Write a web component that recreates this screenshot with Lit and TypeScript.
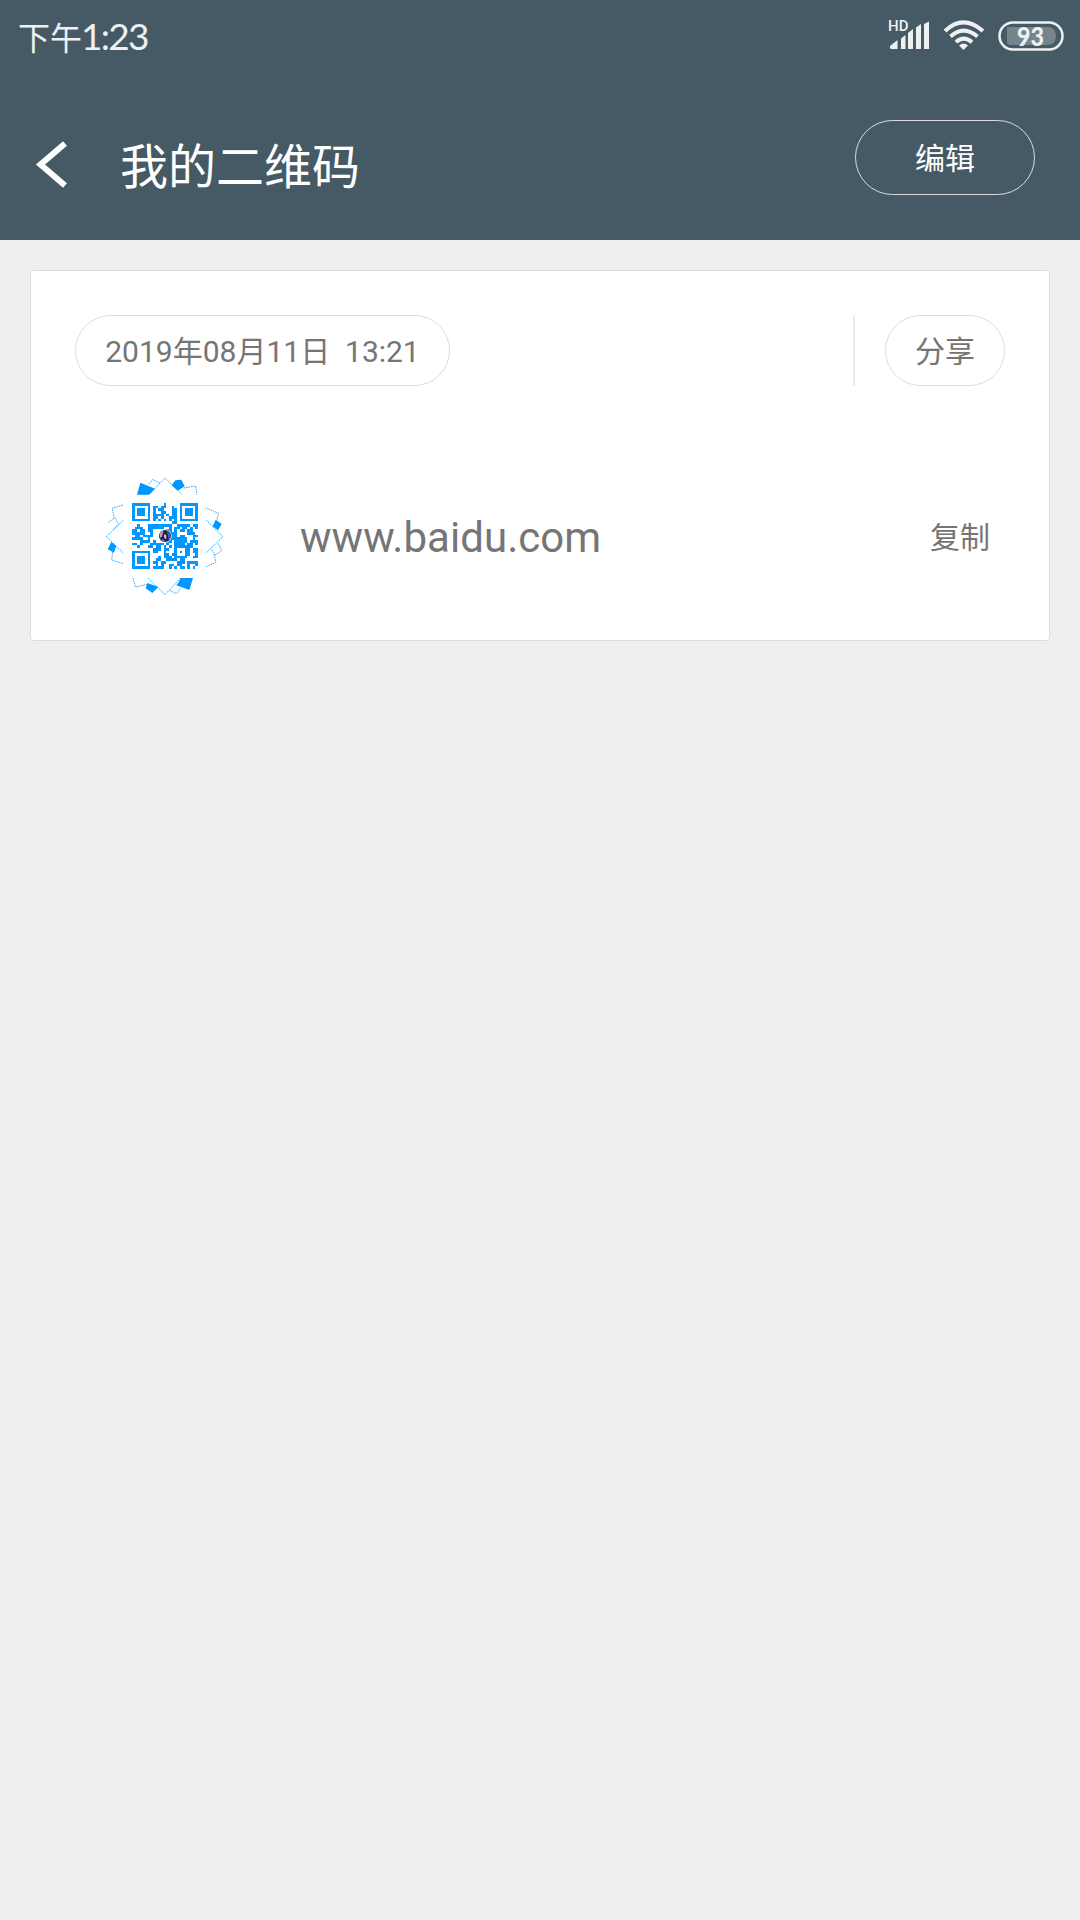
import { LitElement, html, css, svg } from "lit";
import { customElement } from "lit/decorators.js";

const MODULES = [
  "1111111.....1.....1111111",
  "1.....1.11.11..1..1.....1",
  "1.111.1.1.11...11.1.111.1",
  "1.111.1.1..11..11.1.111.1",
  "1.111.1.1111.1.11.1.111.1",
  "1.....1.11.1..111.1.....1",
  "1111111.1.1.1.1.1.1111111",
  "...............11........",
  "..1...111111111..11111.11",
  ".111..111111..1.11.11.1.1",
  "11.11.11.....11.1.11.11..",
  "11111..1......111....111.",
  ".11.1111......111.11...11",
  "1111..1.......1111111..1.",
  "...1111.1....11.11111.111",
  "11.1...11111.1..1111.11.1",
  "..1...11.11.1.1.1111111..",
  "........111.11..1...11.11",
  "1111111.11..1...1.1.11.11",
  "1.....1.....11.11...11..1",
  "1.111.1...1.111.11111..11",
  "1.111.1..11..1111.11.....",
  "1.111.1.11.11....111.1111",
  "1.....1..1.1..11.11..1..1",
  "1111111.1111..1.1.11.1.1.",
];

@customElement("qr-thumb")
class QrThumb extends LitElement {
  static styles = css`
    :host { display: block; width: 130px; height: 130px; }
    svg { display: block; }
    .fill { fill: #0098ff; }
    .line { fill: none; stroke: #0098ff; stroke-width: 2.8; stroke-dasharray: 5 2.5; opacity: .85; }
  `;
  render() {
    return html`<svg width="130" height="130" viewBox="0 0 390 390">
      <g class="fill">
        <path d="M121 38 165 56 147 74H111ZM226 31 244 29 254 49 233 62 215 46ZM347 149 365 162 354 181 338 169ZM34 216 49 228 42 248 23 238ZM142 339 175 351 157 369 137 355ZM242 324H279L268 360 229 346 236 337Z"/>
      </g>
      <g class="line">
        <path d="M147 74 195 24 245 73M147 43 158 28 180 39M251 54 287 48 291 74M318 114 356 130 350 151M318 150 369 200 318 249M355 220 365 242 346 255 333 236M342 253 348 277 318 291M69 105 36 115 44 147M70 151 19 200 70 249M25 157 45 143 56 163 39 179M38 247 35 270 70 281M99 324 106 351 142 343M144 324 195 374 242 324M210 362 230 371 241 355"/>
      </g>
      <g transform="translate(96 99) scale(7.92)" class="fill" shape-rendering="crispEdges">
        ${MODULES.map((row, y) => [...row].map((m, x) => m === "1"
          ? svg`<rect x=${x} y=${y} width="1" height="1"/>` : null))}
      </g>
      <circle cx="195" cy="198" r="20" fill="#fff"/>
      <circle cx="195" cy="198" r="18" fill="#29204b"/>
      <path d="M202 184Q211 190 212 203L205 211Q207 196 200 186Z" fill="#4464cf"/>
      <path d="M179 192Q186 181 190 184L186 199 180 204Z" fill="#bfa4c7"/>
      <path d="M194 192 199 197 198 208 194 205 192 197Z" fill="#ead2da"/>
      <path d="M188 207 195 213 190 215 183 210Z" fill="#8e6d96"/>
    </svg>`;
  }
}

@customElement("app-root")
class AppRoot extends LitElement {
  static styles = css`
    :host {
      display: flex; flex-direction: column; width: 1080px; height: 1920px;
      background: #eee; color: #757575; overflow: hidden;
      font-family: Roboto, "Noto Sans CJK SC", sans-serif;
    }
    * { box-sizing: border-box; }
    svg { display: block; flex: none; overflow: visible; }
    .top { height: 240px; background: #465a65; color: #fff; }
    .status {
      height: 72px; padding: 0 16px 0 18px; display: flex;
      align-items: center; justify-content: space-between; color: #eef0f1;
    }
    .time { display: flex; align-items: baseline; font-size: 32px; line-height: 40px; padding-top: 2px; }
    .clock { font-family: Lato, sans-serif; font-size: 37px; letter-spacing: -1.7px; margin-left: -1px; }
    .bar { height: 168px; display: flex; padding: 0 45px 0 36px; }
    .back { margin-top: 69px; }
    .title {
      margin: 62px 0 0 52px; font-size: 48px; line-height: 58px; font-weight: 400;
      font-family: "Noto Sans CJK SC", sans-serif; white-space: nowrap;
    }
    .pill {
      display: flex; align-items: center; justify-content: center;
      border: 1px solid #dcdcdc; border-radius: 36px; font-size: 30px; white-space: pre;
      line-height: 44px; padding-top: 2px;
    }
    .edit { margin: 48px 0 0 auto; width: 180px; height: 75px; padding-top: 3px; border-radius: 38px; }
    .card {
      margin: 30px; height: 371px; padding: 44px; background: #fff;
      border: 1px solid #dcdcdc; border-radius: 4px;
    }
    .meta { display: flex; height: 71px; }
    .date { width: 375px; }
    .rule { width: 2px; margin: 0 30px 0 auto; background: #ececec; }
    .share { width: 120px; }
    .entry { display: flex; align-items: center; margin-top: 84px; height: 130px; padding: 0 15px 0 25px; }
    .link { margin-left: 70px; font-size: 42px; line-height: 54px; padding-top: 5px; letter-spacing: .05px; }
    .copy { margin-left: auto; font-size: 30px; line-height: 44px; padding-top: 5px; }
    .hd { font: 500 15px Roboto, sans-serif; }
    .level { font: 900 26px Lato, sans-serif; }
  `;
  render() {
    return html`
      <header class="top">
        <div class="status">
          <div class="time"><span>下午</span><span class="clock">1:23</span></div>
          <svg width="176" height="36" viewBox="0 0 176 36" fill="#eef0f1">
            <text class="hd" x="0" y="13">HD</text>
            <path d="M2 29.5V28L9.5 22V31H3.5Q2 31 2 29.5ZM13 20.5 17.5 17V31H13ZM20 15 25 11V31H20ZM28 9.5 33 6V31H28ZM36 6 41 3.5V31H36Z"/>
            <g fill="none" stroke="#eef0f1" stroke-width="4">
              <path d="M57 13Q75 -4.300 95 13"/>
              <path d="M62.500 18.500Q75.500 6.600 89.500 18.500"/>
              <path d="M68 24.100Q75.500 17 84 24.100"/>
            </g>
            <path d="M71 27.500Q75.500 23.500 80 27.500L75.500 32Z"/>
            <rect x="111.500" y="4.500" width="63" height="27" rx="13.500" fill="none" stroke="#eef0f1" stroke-width="2.500"/>
            <path d="M119 9H159Q168 9 168 18T159 27H122Q119 27 119 24Z" fill="#76848c"/>
            <text class="level" x="129" y="27.500" textLength="27" lengthAdjust="spacingAndGlyphs">93</text>
          </svg>
        </div>
        <div class="bar">
          <svg class="back" width="32" height="47" viewBox="0 0 32 47">
            <path d="M29 2.500 4.500 23.500 29 44.500" fill="none" stroke="#fff" stroke-width="6"/>
          </svg>
          <h1 class="title">我的二维码</h1>
          <div class="pill edit">编辑</div>
        </div>
      </header>
      <main class="card">
        <div class="meta">
          <div class="pill date">2019年08月11日  13:21</div>
          <div class="rule"></div>
          <div class="pill share">分享</div>
        </div>
        <div class="entry">
          <qr-thumb></qr-thumb>
          <div class="link">www.baidu.com</div>
          <div class="copy">复制</div>
        </div>
      </main>`;
  }
}
